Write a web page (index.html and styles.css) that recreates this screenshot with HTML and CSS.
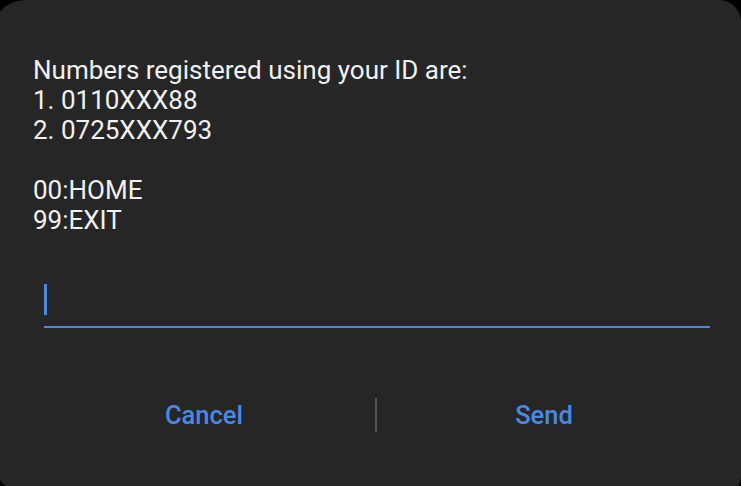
FILE: index.html
```html
<!DOCTYPE html>
<html lang="en">
<head>
    <meta charset="UTF-8">
    <meta name="viewport" content="width=device-width, initial-scale=1.0">
    <title>USSD</title>
    <link rel="stylesheet" href="styles.css">
</head>
<body>
    <div class="dialog">
        <p class="message">Numbers registered using your ID are:
1. 0110XXX88
2. 0725XXX793

00:HOME
99:EXIT</p>
        <div class="field">
            <span class="caret"></span>
        </div>
        <div class="actions">
            <button class="action">Cancel</button>
            <span class="divider"></span>
            <button class="action">Send</button>
        </div>
    </div>
</body>
</html>
```

FILE: styles.css
```css
:root {
    --dialog-bg: #262626;
    --text-color: #f1f1f1;
    --accent-color: #4a88e2;
    --divider-color: #555555;
}

* {
    margin: 0;
    padding: 0;
    box-sizing: border-box;
    font-family: Roboto, 'Noto Sans', sans-serif;
}

body {
    background: #000;
    overflow: hidden;
    height: 486px;
}

.dialog {
    margin-left: -8px;
    width: 749px;
    height: 496px;
    background-color: var(--dialog-bg);
    border-radius: 33px 22px 20px 40px;
    padding: 55px 30px 0 41px;
}

.message {
    color: var(--text-color);
    font-size: 26px;
    line-height: 30px;
    white-space: pre-line;
}

.field {
    margin: 49px 1px 0 11px;
    padding-bottom: 11px;
    border-bottom: 2px solid var(--accent-color);
}

.caret {
    display: block;
    width: 3px;
    height: 31px;
    background-color: var(--accent-color);
}

.actions {
    display: flex;
    align-items: center;
    height: 34px;
    margin-top: 70px;
}

.action {
    flex: 1;
    background: none;
    border: none;
    color: var(--accent-color);
    font-size: 25.5px;
    font-weight: 500;
    cursor: pointer;
}

.action:first-child {
    flex: 0 0 342px;
}

.divider {
    width: 2px;
    height: 34px;
    background-color: var(--divider-color);
}
```
